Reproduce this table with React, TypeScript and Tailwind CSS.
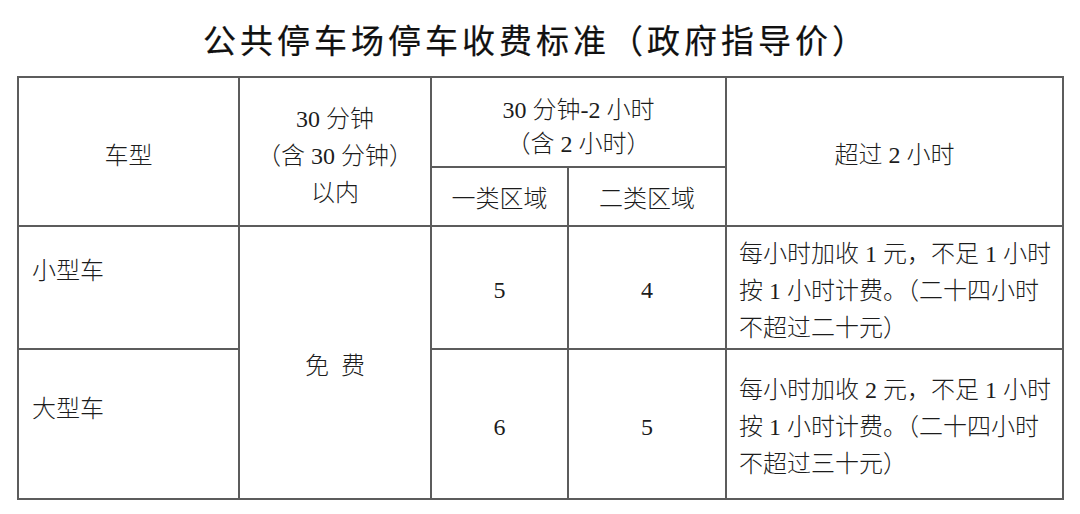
const body = "'Liberation Serif', 'Noto Sans CJK SC', serif";

const cell = 'border-2 border-[#5c5c5c] text-center align-middle';

const App = () => {
  return (
    <div className="w-[1080px] h-[514px] bg-white text-[#1c1c1c]">
      <div
        className="flex h-[76px] items-center justify-center pt-[3px] pr-[8px] text-[33px] font-normal tracking-[4px] text-[#111] [-webkit-text-stroke:0.2px_#111]"
        style={{ fontFamily: "'Noto Sans CJK SC', sans-serif" }}
      >
        公共停车场停车收费标准（政府指导价）
      </div>

      <div className="pl-[17px]">
        <table
          className="w-[1045px] table-fixed border-collapse text-[24px] font-light leading-[37px]"
          style={{ fontFamily: body }}
        >
          <colgroup>
            <col className="w-[221px]" />
            <col className="w-[192px]" />
            <col className="w-[137px]" />
            <col className="w-[158px]" />
            <col className="w-[337px]" />
          </colgroup>
          <tbody>
            <tr className="h-[90px]">
              <td rowSpan={2} className={`${cell} pt-[9px]`}>
                车型
              </td>
              <td rowSpan={2} className={`${cell} pt-[9px]`}>
                30 分钟
                <br />
                （含 30 分钟）
                <br />
                以内
              </td>
              <td colSpan={2} className={`${cell} pt-[9px] leading-[34px]`}>
                30 分钟-2 小时
                <br />
                （含 2 小时）
              </td>
              <td rowSpan={2} className={`${cell} pt-[7px]`}>
                超过 2 小时
              </td>
            </tr>
            <tr className="h-[59px]">
              <td className={`${cell} pt-[6px]`}>一类区域</td>
              <td className={`${cell} pt-[6px]`}>二类区域</td>
            </tr>
            <tr className="h-[123px]">
              <td className={`${cell} !text-left pl-[13px] pb-[33px]`}>小型车</td>
              <td rowSpan={2} className={`${cell} pt-[7px]`}>
                免&nbsp;&nbsp;费
              </td>
              <td className={`${cell} pt-[5px]`}>5</td>
              <td className={`${cell} pt-[5px]`}>4</td>
              <td className={`${cell} !text-left pl-[12px] pt-[7px] whitespace-nowrap`}>
                每小时加收 1 元，不足 1 小时
                <br />
                按 1 小时计费。（二十四小时
                <br />
                不超过二十元）
              </td>
            </tr>
            <tr className="h-[150px]">
              <td className={`${cell} !text-left pl-[13px] pb-[30px]`}>大型车</td>
              <td className={`${cell} pt-[6px]`}>6</td>
              <td className={`${cell} pt-[6px]`}>5</td>
              <td className={`${cell} !text-left pl-[12px] pt-[6px] whitespace-nowrap`}>
                每小时加收 2 元，不足 1 小时
                <br />
                按 1 小时计费。（二十四小时
                <br />
                不超过三十元）
              </td>
            </tr>
          </tbody>
        </table>
      </div>
    </div>
  );
};

export default App;
